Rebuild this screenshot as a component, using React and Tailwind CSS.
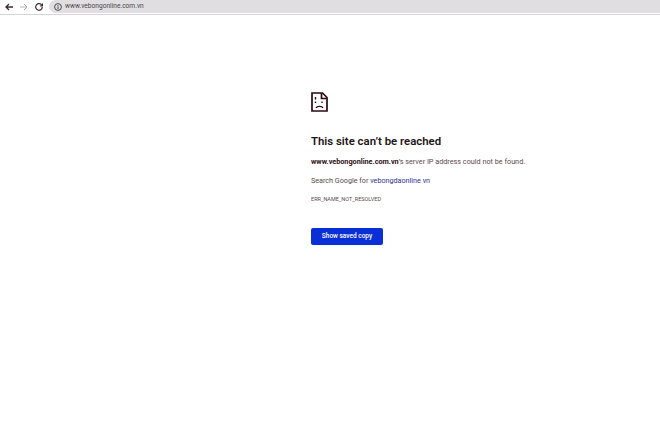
import React from 'react';

function SadFile() {
    return (
        <svg width="17" height="20" viewBox="0 0 17 20" fill="none" stroke="#2a0a12" strokeWidth="1.7">
            <path d="M1 1h10.5l4.5 4.5V19H1z" />
            <path d="M10.5 1v5.5H16" />
            <path d="M4.5 5v2.5M4.5 9.5v1.5M11 9.5v1.5" strokeWidth="1.4" />
            <path d="M5 16c1-2.2 6-2.2 7 0" strokeWidth="1.4" />
        </svg>
    );
}

function Toolbar() {
    return (
        <div className="flex items-start h-[15px] border-b border-[#d6d4d6] bg-white">
            <div className="flex items-center pl-[5px] w-[49px] h-[14px] gap-[7px] shrink-0">
                <svg className="shrink-0" width="8" height="8" viewBox="0 0 8 8" fill="none" stroke="#3a2a30" strokeWidth="1.3"><path d="M8 4H1M4 1 1 4l3 3" /></svg>
                <svg className="shrink-0" width="8" height="8" viewBox="0 0 8 8" fill="none" stroke="#b5b3b5" strokeWidth="1"><path d="M0 4h7M4 1l3 3-3 3" /></svg>
                <svg className="shrink-0" width="8" height="8" viewBox="0 0 8 8" fill="none" stroke="#3a2a30" strokeWidth="1.2"><path d="M6.8 2.2A3.3 3.3 0 1 0 7.3 4" /><path d="M7.4.6v2.2H5.2" /></svg>
            </div>
            <div className="flex-1 h-[13px] bg-[#e0dee1] rounded-l-full flex items-center pl-[5px]">
                <svg className="shrink-0" width="8" height="8" viewBox="0 0 8 8" fill="none" stroke="#3f3a3e" strokeWidth="0.9"><circle cx="4" cy="4" r="3.4" /><path d="M4 3.4v2.6M4 2v.9" /></svg>
                <span className="ml-[3px] text-[6.6px] leading-none text-[#4a4448] font-['Roboto',sans-serif]">www.vebongonline.com.vn</span>
            </div>
        </div>
    );
}

export default function App() {
    return (
        <div className="w-[660px] h-[431px] bg-white overflow-hidden font-['Roboto',sans-serif]">
            <Toolbar />
            <main className="pl-[311px] pt-[77px]">
                <SadFile />
                <h1 className="mt-[21px] text-[11.4px] leading-[16px] font-semibold text-[#1d1416]">This site can’t be reached</h1>
                <p className="mt-[7px] text-[7.25px] leading-[12px] text-[#5a4a4e]">
                    <b className="font-bold text-[#2a1015]">www.vebongonline.com.vn</b>’s server IP address could not be found.
                </p>
                <p className="mt-[7px] text-[7.2px] leading-[12px] text-[#5a4a4e]">
                    Search Google for <span className="text-[#2e2f96]">vebongdaonline vn</span>
                </p>
                <p className="mt-[7px] text-[5.5px] leading-[10px] text-[#5a4a4e]">ERR_NAME_NOT_RESOLVED</p>
                <button className="block mt-[24px] w-[72px] h-[17px] rounded-[2px] bg-[#0b2fd6] text-white text-[6.5px] font-medium leading-none">Show saved copy</button>
            </main>
        </div>
    );
}
